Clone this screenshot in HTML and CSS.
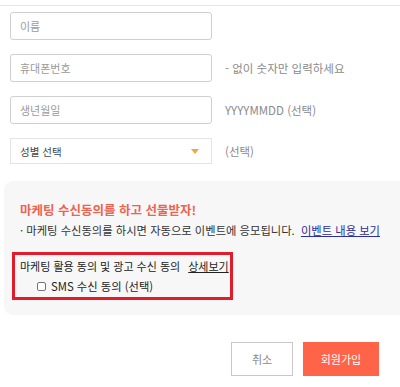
FILE: index.html
```html
<!DOCTYPE html>
<html lang="ko">
<head>
<meta charset="utf-8">
<link rel="stylesheet" href="styles.css">
</head>
<body>
<div class="page">
  <div class="topline"></div>
  <form class="form">
    <div class="row">
      <div class="field"><span class="ph">이름</span></div>
    </div>
    <div class="row">
      <div class="field"><span class="ph">휴대폰번호</span></div>
      <span class="hint">- 없이 숫자만 입력하세요</span>
    </div>
    <div class="row">
      <div class="field"><span class="ph">생년월일</span></div>
      <span class="hint">YYYYMMDD (선택)</span>
    </div>
    <div class="row">
      <div class="select"><span class="sel-text">성별 선택</span><span class="caret"></span></div>
      <span class="hint">(선택)</span>
    </div>
  </form>
  <section class="panel">
    <h2 class="promo">마케팅 수신동의를 하고 선물받자!</h2>
    <p class="desc">· 마케팅 수신동의를 하시면 자동으로 이벤트에 응모됩니다. <a class="link" href="#">이벤트 내용 보기</a></p>
    <div class="consent">
      <p class="consent-title">마케팅 활용 동의 및 광고 수신 동의 <a class="detail" href="#">상세보기</a></p>
      <label class="check"><span class="box"></span>SMS 수신 동의 (선택)</label>
    </div>
  </section>
  <div class="actions">
    <button class="btn cancel" type="button">취소</button>
    <button class="btn join" type="button">회원가입</button>
  </div>
</div>
</body>
</html>
```
FILE: styles.css
```css
* { box-sizing: border-box; }
html, body { margin: 0; padding: 0; background: #fff; }
body {
  font-family: "Noto Sans CJK KR", "Noto Sans", sans-serif;
  color: #333;
  width: 400px;
  overflow: hidden;
}
.page { width: 400px; }
.topline { height: 6px; border-bottom: 1px solid #e6e6e6; }
.form { display: flex; flex-direction: column; gap: 14px; padding: 6px 0 0 10px; }
.row { display: flex; align-items: center; gap: 13px; }
.field {
  width: 202px; height: 28px;
  border: 1px solid #cfcfcf; border-radius: 3px;
  display: flex; align-items: center; padding-left: 9px;
}
.ph { font-size: 11px; color: #9a9a9a; }
.hint { font-size: 11.5px; color: #8a8a8a; }
.select {
  width: 202px; height: 26px;
  border: 1px solid #e4e4e4;
  display: flex; align-items: center; justify-content: space-between;
  padding: 0 12px 0 9px;
}
.sel-text { font-size: 10.5px; color: #444; }
.caret {
  width: 0; height: 0;
  border-left: 4.5px solid transparent; border-right: 4.5px solid transparent;
  border-top: 5px solid #f0a838;
}
.panel {
  margin: 17px 0 0 4px;
  background: #f7f7f7;
  border-radius: 9px 0 0 9px;
  height: 134px;
  padding: 20px 0 0 8px;
}
.promo { margin: 0 0 0 8px; font-size: 12.5px; font-weight: 700; color: #ec6450; line-height: 18px; }
.desc { margin: 3px 0 0 8px; font-size: 11.3px; color: #333; line-height: 16px; white-space: nowrap; }
.link { color: #2e2e9e; text-decoration: underline; margin-left: 3px; }
.consent {
  margin-top: 14px;
  width: 221px; height: 48px;
  border: 3px solid #e21c2a;
  padding: 3px 0 0 5px;
}
.consent-title { margin: 0; font-size: 11px; color: #222; line-height: 16px; white-space: nowrap; }
.detail { color: #222; text-decoration: underline; margin-left: 5px; }
.check { display: flex; align-items: center; gap: 5px; margin: 4px 0 0 17px; font-size: 11.3px; color: #222; line-height: 16px; }
.box { width: 9px; height: 9px; border: 1px solid #777; border-radius: 2px; background: #fff; }
.actions { display: flex; justify-content: flex-end; gap: 10px; margin: 27px 21px 0 0; }
.btn { height: 34px; font-family: inherit; font-size: 11px; border-radius: 0; cursor: pointer; }
.cancel { width: 62px; background: #fff; border: 1px solid #c8c8c8; color: #888; }
.join { width: 76px; background: #ff6449; border: none; color: #fff; }
```
